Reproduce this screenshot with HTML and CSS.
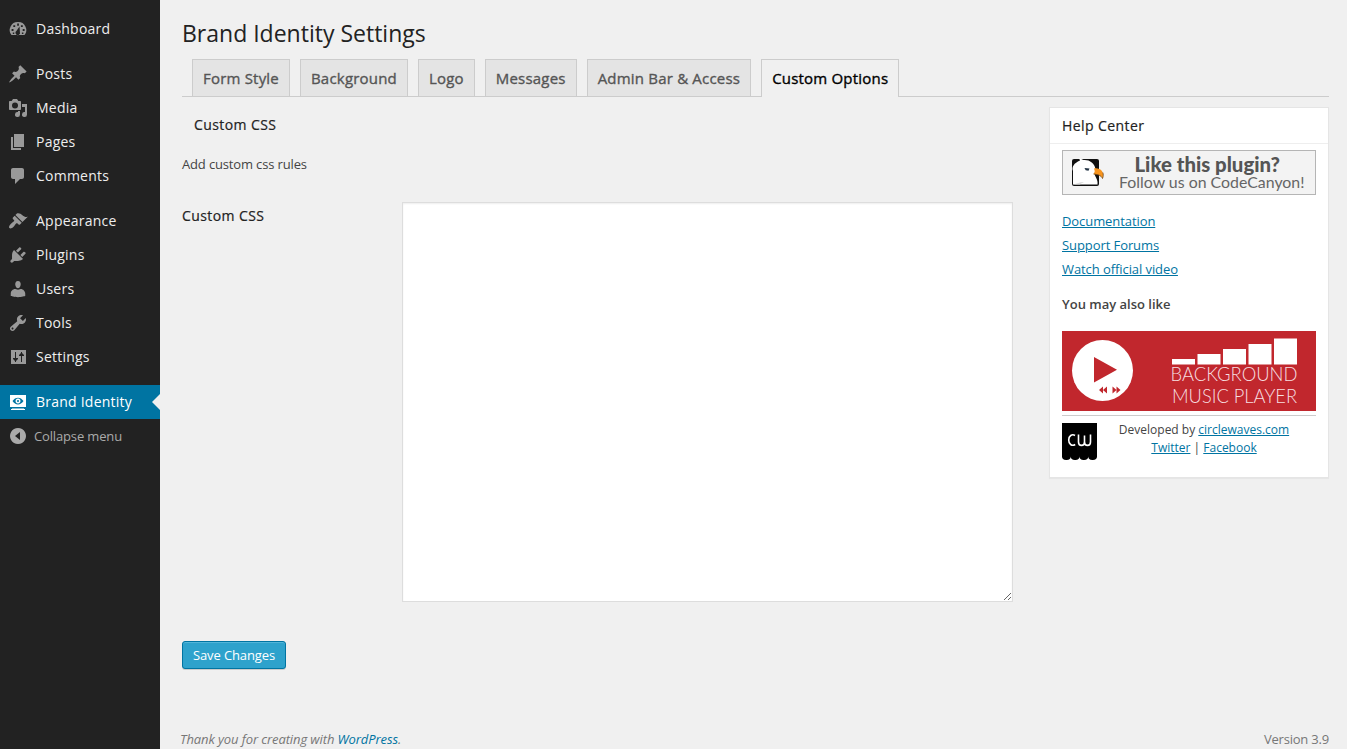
FILE: index.html
```html
<!DOCTYPE html>
<html lang="en">
<head>
<meta charset="utf-8">
<title>Brand Identity Settings</title>
<link rel="stylesheet" href="styles.css">
</head>
<body>
<nav class="sidebar">
  <ul class="menu">
    <li class="item"><svg class="icon" viewBox="0 0 20 20"><path fill-rule="evenodd" d="M3.500 16A8 8 0 0 1 10 3a8 8 0 0 1 6.500 13zM9.200 4.500v2.200h1.700V4.500zM5.300 6.300v1.800h1.900V6.300zM12.900 6.300v1.800h1.900V6.300zM3.600 10v1.900h1.900V10zM14.700 10v1.900h1.900V10zM11.500 7.500l-2.900 4.300a2.300 2.300 0 1 0 3.300 1.200zM4.800 13.500v1.500h1.500v-1.500zM13.900 13.500v1.500h1.500v-1.500z"/></svg>Dashboard</li>
    <li class="item gap"><svg class="icon" viewBox="0 0 20 20"><path d="M10.440 3.020l1.820-1.820 6.360 6.350-1.830 1.820c-1.050-.680-2.480-.570-3.410.360l-.750.750c-.920.930-1.040 2.350-.350 3.410l-1.830 1.820-2.410-2.410-2.800 2.790c-.420.420-3.380 2.710-3.800 2.290s1.860-3.390 2.280-3.810l2.790-2.790L4.100 9.360l1.830-1.820c1.050.690 2.480.570 3.400-.360l.750-.750c.930-.920 1.050-2.350.360-3.410z"/></svg>Posts</li>
    <li class="item"><svg class="icon" viewBox="0 0 20 20"><path fill-rule="evenodd" d="M13 11V4c0-.550-.450-1-1-1h-1.670L9 1H5L3.670 3H2c-.550 0-1 .450-1 1v7c0 .550.450 1 1 1h10c.550 0 1-.450 1-1zM7 4.500a3 3 0 1 1 0 6 3 3 0 0 1 0-6zM14 6h5v10.500a2.500 2.500 0 1 1-2-2.450V9h-3zM10 14.050V13h2v3.500a2.500 2.500 0 1 1-2-2.450z"/></svg>Media</li>
    <li class="item"><svg class="icon" viewBox="0 0 20 20"><path d="M6 15V2h10v13zM5 16h8v2H3V5h2z"/></svg>Pages</li>
    <li class="item"><svg class="icon" viewBox="0 0 20 20"><path d="M5 2h9c1.100 0 2 .900 2 2v7c0 1.100-.900 2-2 2h-2l-5 5v-5H5c-1.100 0-2-.900-2-2V4c0-1.100.900-2 2-2z"/></svg>Comments</li>
    <li class="item gap"><svg class="icon" viewBox="0 0 20 20"><path d="M14.480 11.060L7.410 3.990l1.500-1.500c.500-.560 2.300-.470 3.510.320 1.210.800 1.430 1.280 2.910 2.100 1.180.640 2.450 1.260 4.450.850zm-.710.710L6.700 4.700 4.930 6.470c-.390.390-.390 1.020 0 1.410l1.060 1.060c.390.390.390 1.030 0 1.420-.600.600-1.430 1.110-2.210 1.690-.350.260-.700.530-1.010.840C1.430 14.230.400 16.080 1.400 17.070c.990 1 2.840-.030 4.180-1.360.310-.310.580-.660.850-1.020.570-.780 1.080-1.610 1.690-2.210.390-.390 1.020-.390 1.410 0l1.060 1.060c.390.390 1.020.390 1.410 0z"/></svg>Appearance</li>
    <li class="item"><svg class="icon" viewBox="0 0 20 20"><path d="M13.110 4.360L9.870 7.600 8 5.730l3.240-3.240c.350-.340 1.050-.200 1.560.320.520.510.660 1.210.310 1.550zm-8 1.770l.910-1.120 9.010 9.010-1.190.840c-.710.710-2.630 1.160-3.820 1.160H6.140L4.900 17.260c-.590.590-1.540.590-2.120 0-.590-.580-.590-1.530 0-2.120l1.240-1.240v-3.880c0-1.130.400-3.190 1.090-3.890zm7.260 3.970l3.240-3.240c.340-.350 1.040-.210 1.550.310.520.510.660 1.210.310 1.550l-3.240 3.250z"/></svg>Plugins</li>
    <li class="item"><svg class="icon" viewBox="0 0 20 20"><path d="M10 9.250c-2.270 0-2.730-3.440-2.730-3.440C7 4.020 7.820 2 9.970 2c2.160 0 2.980 2.020 2.710 3.810 0 0-.410 3.440-2.680 3.440zm0 1.500L12.720 10c2.390 0 4.520 2.330 4.520 4.530v2.490s-3.650 1.130-7.240 1.130c-3.650 0-7.240-1.130-7.240-1.130v-2.490c0-2.250 1.940-4.480 4.470-4.480z"/></svg>Users</li>
    <li class="item"><svg class="icon" viewBox="0 0 20 20"><path fill-rule="evenodd" d="M16.680 9.770c-1.340 1.340-3.300 1.670-4.950.990l-5.410 6.520c-.990.990-2.590.990-3.580 0s-.990-2.590 0-3.570l6.520-5.420c-.680-1.650-.350-3.610.990-4.950 1.280-1.280 3.120-1.620 4.720-1.060l-2.890 2.890 2.820 2.820 2.860-2.870c.530 1.580.180 3.390-1.080 4.650zM3.810 16.210c.400.390 1.040.390 1.430 0 .400-.400.400-1.040 0-1.430-.390-.400-1.030-.400-1.430 0-.390.390-.390 1.030 0 1.430z"/></svg>Tools</li>
    <li class="item"><svg class="icon" viewBox="0 0 20 20"><path fill-rule="evenodd" d="M18 17V3H3v14zM7 5h1v6h2v1l-2 2v1H7v-1l-2-2v-1h2zM13 5h1v1l2 2v1h-2v6h-1V9h-2V8l2-2z"/></svg>Settings</li>
    <li class="item gap current"><svg class="icon" viewBox="0 0 20 20"><path fill-rule="evenodd" d="M2 3h16v12H2zM4.500 9c2.800-4.500 8.200-4.500 11 0-2.800 4.500-8.200 4.500-11 0z"/><path fill-rule="evenodd" d="M10 6.500a2.500 2.500 0 1 0 .01 0zM10 8a1 1 0 1 0 .01 0z"/><path d="M4 16h12v.600H4zM3 17h14v1H3z"/></svg>Brand Identity</li>
  </ul>
  <div class="collapse"><svg class="icon" viewBox="0 0 20 20"><path fill-rule="evenodd" d="M10 2a8 8 0 1 0 .01 0zM12 6v8l-5-4z"/></svg>Collapse menu</div>
</nav>
<main class="main">
  <h1 class="title">Brand Identity Settings</h1>
  <div class="tabs">
    <a class="tab">Form Style</a><a class="tab">Background</a><a class="tab">Logo</a><a class="tab">Messages</a><a class="tab">Admin Bar &amp; Access</a><a class="tab active">Custom Options</a>
  </div>
  <div class="columns">
    <section class="form">
      <h3 class="section-title">Custom CSS</h3>
      <p class="hint">Add custom css rules</p>
      <div class="row"><label class="label" for="css">Custom CSS</label><textarea class="code" id="css"></textarea></div>
      <button class="save">Save Changes</button>
    </section>
    <aside class="box">
      <h3 class="box-title">Help Center</h3>
      <div class="box-body">
        <svg class="follow" viewBox="0 0 254 45">
          <rect x=".5" y=".5" width="253" height="44" fill="#f3f3f3" stroke="#b5b5b5"/>
          <rect x="10" y="9" width="27" height="27" rx="2" fill="#111"/>
          <path d="M11 34.500V21c-1.500-4 1-8 7-10.500L17 8l4.500 2c6-.500 11 3 12 9 0 3-1.500 4-.500 6.500 1.500 3 3 5.500 2.500 9z" fill="#fff"/>
          <path d="M11 34.500c5-1 7-3 11-2.500-2 1-3 1.500-4 2.500z" fill="#ddd"/>
          <path d="M32 18.500c6-1 11 3 8.500 10-1.500-3.500-4-4-9-4.500 1.500-1.500 1.500-3 .5-5.500z" fill="#f7941e"/>
          <path d="M31.500 24c4 .500 7.500 1 9 4.500 1-2.500 1-4 .3-6" fill="none" stroke="#744511" stroke-width=".8"/>
          <path d="M22.500 18l5 .500-1 2.200-2.800-.500z" fill="#234"/>
          <text x="72.500" y="22" class="follow-strong" textLength="145.500" lengthAdjust="spacingAndGlyphs">Like this plugin?</text>
          <text x="57" y="38" class="follow-text" textLength="185.500" lengthAdjust="spacingAndGlyphs">Follow us on CodeCanyon!</text>
        </svg>
        <ul class="links"><li><a class="link">Documentation</a></li><li><a class="link">Support Forums</a></li><li><a class="link">Watch official video</a></li></ul>
        <h4 class="also">You may also like</h4>
        <svg class="player" viewBox="0 0 254 80">
          <rect width="254" height="80" fill="#c1272d"/>
          <circle cx="40.500" cy="39.500" r="30.500" fill="#fff"/>
          <path fill="#c1272d" d="M32 26v25.500l23-12.700zM37 59l4-3.500v7zM41 59l4-3.500v7zM50.500 55.500v7l4-3.500zM54.500 55.500v7l4-3.500z"/>
          <path fill="#fff" d="M110 28h23v5.500h-23zM135.500 23h23v10.500h-23zM161 18h23v15.500h-23zM186.500 13h23v20.500h-23zM212 7.500h23v26h-23z"/>
          <text x="108.500" y="50" class="player-text" textLength="127" lengthAdjust="spacingAndGlyphs">BACKGROUND</text>
          <text x="110" y="72" class="player-text" textLength="125" lengthAdjust="spacingAndGlyphs">MUSIC PLAYER</text>
        </svg>
        <div class="credits">
          <svg class="cw" viewBox="0 0 35 37"><path d="M0 0h35v33.500a4.370 3.500 0 0 1-8.750 0 4.370 3.500 0 0 1-8.750 0 4.370 3.500 0 0 1-8.750 0A4.370 3.500 0 0 1 0 33.500z"/><path d="M13 12.500C10 10.500 6.700 13 6.700 17s3 6.500 6.500 4.500M16.500 11.500v7.500c0 4.500 6 4.500 6 0v-6.500V19c0 4.500 6 4.500 6 0v-7.500" fill="none" stroke="#fff" stroke-width="1.600"/></svg>
          <p class="developed">Developed by <a class="link">circlewaves.com</a><br><a class="link">Twitter</a> | <a class="link">Facebook</a></p>
        </div>
      </div>
    </aside>
  </div>
  <footer class="footer"><em class="thanks">Thank you for creating with <a class="wp">WordPress</a>.</em><span class="version">Version 3.9</span></footer>
</main>
</body>
</html>
```
FILE: styles.css
```css
* { box-sizing: border-box; }
body { margin: 0; height: 749px; overflow: hidden; display: flex; background: #f0f0f0; color: #444; font: 13px/18px "Open Sans", sans-serif; }
h1, h3, h4, p, ul { margin: 0; padding: 0; font-weight: 400; }
ul { list-style: none; }
.sidebar { width: 160px; flex: none; background: #222; padding-top: 12px; }
.item { height: 34px; display: flex; align-items: center; padding-left: 8px; gap: 8px; font-size: 14px; letter-spacing: .23px; color: #eee; }
.gap { margin-top: 11px; }
.icon { width: 20px; height: 20px; flex: none; fill: #999; }
.current { position: relative; background: #0074a2; color: #fff; }
.current .icon { fill: #fff; }
.current::after { content: ""; position: absolute; right: 0; top: 9px; border: 8px solid transparent; border-left: 0; border-right-color: #f0f0f0; }
.collapse { height: 34px; display: flex; align-items: center; padding-left: 8px; gap: 6px; letter-spacing: -.15px; color: #aaa; }
.collapse .icon { fill: #aaa; }
.main { flex: 1; display: flex; flex-direction: column; padding: 19px 18px 0 22px; }
.title { font-size: 23px; line-height: 29px; color: #222; }
.tabs { display: flex; gap: 10px; margin-top: 11px; padding-left: 10px; border-bottom: 1px solid #ccc; }
.tab { height: 37px; border: 1px solid #ccc; border-bottom: 0; background: #e4e4e4; color: #555; padding: 6px 10px; font-size: 15px; line-height: 24px; letter-spacing: .2px; -webkit-text-stroke: .35px; white-space: nowrap; }
.active { height: 38px; margin-bottom: -1px; background: #f0f0f0; color: #000; }
.columns { display: flex; justify-content: space-between; align-items: flex-start; height: 621px; flex: none; }
.form { width: 831px; padding-top: 18px; }
.section-title, .label, .box-title { font-size: 14px; line-height: 20px; letter-spacing: .42px; -webkit-text-stroke: .2px; color: #222; }
.section-title { padding-left: 12px; }
.hint { margin-top: 20px; letter-spacing: -.15px; }
.row { display: flex; margin-top: 29px; }
.label { width: 220px; padding-top: 4px; }
.code { width: 611px; height: 400px; margin: 0; border: 1px solid #ddd; background: #fff; box-shadow: inset 0 1px 2px rgba(0,0,0,.07); outline: 0; }
.save { display: block; width: 104px; height: 28px; margin-top: 39px; padding: 0 0 1px; border: 1px solid #0074a2; border-radius: 3px; background: #2ea2cc; color: #fff; font: 13px "Open Sans", sans-serif; letter-spacing: -.1px; box-shadow: inset 0 1px 0 rgba(120,200,230,.5), 0 1px 0 rgba(0,0,0,.15); }
.box { width: 280px; height: 371px; margin-top: 10px; background: #fff; border: 1px solid #e5e5e5; box-shadow: 0 1px 1px rgba(0,0,0,.04); }
.box-title { height: 36px; padding: 8px 12px; border-bottom: 1px solid #eee; }
.box-body { padding: 6px 12px; }
.follow { display: block; width: 254px; height: 45px; }
.follow-strong { font: 900 20px Lato, sans-serif; fill: #555; }
.follow-text { font: 400 16px Lato, sans-serif; fill: #666; }
.links { margin-top: 14px; line-height: 24px; letter-spacing: -.08px; }
.link { color: #0074a2; text-decoration: underline; }
.also { margin-top: 14px; font-weight: 600; }
.player { display: block; width: 254px; height: 80px; margin-top: 18px; }
.player-text { font: 300 19px Lato, sans-serif; fill: #f7dfe0; }
.credits { display: flex; margin-top: 4px; padding-top: 5px; border-top: 1px solid #ccc; }
.cw { width: 35px; height: 37px; margin-top: 2px; }
.developed { flex: 1; font-size: 12px; line-height: 18px; text-align: center; padding-right: 5px; }
.footer { display: flex; justify-content: space-between; margin: 12px 0 0 -2px; color: #777; white-space: nowrap; }
.thanks { letter-spacing: -.1px; }
.version { letter-spacing: -.2px; }
.wp { color: #0074a2; }
```
